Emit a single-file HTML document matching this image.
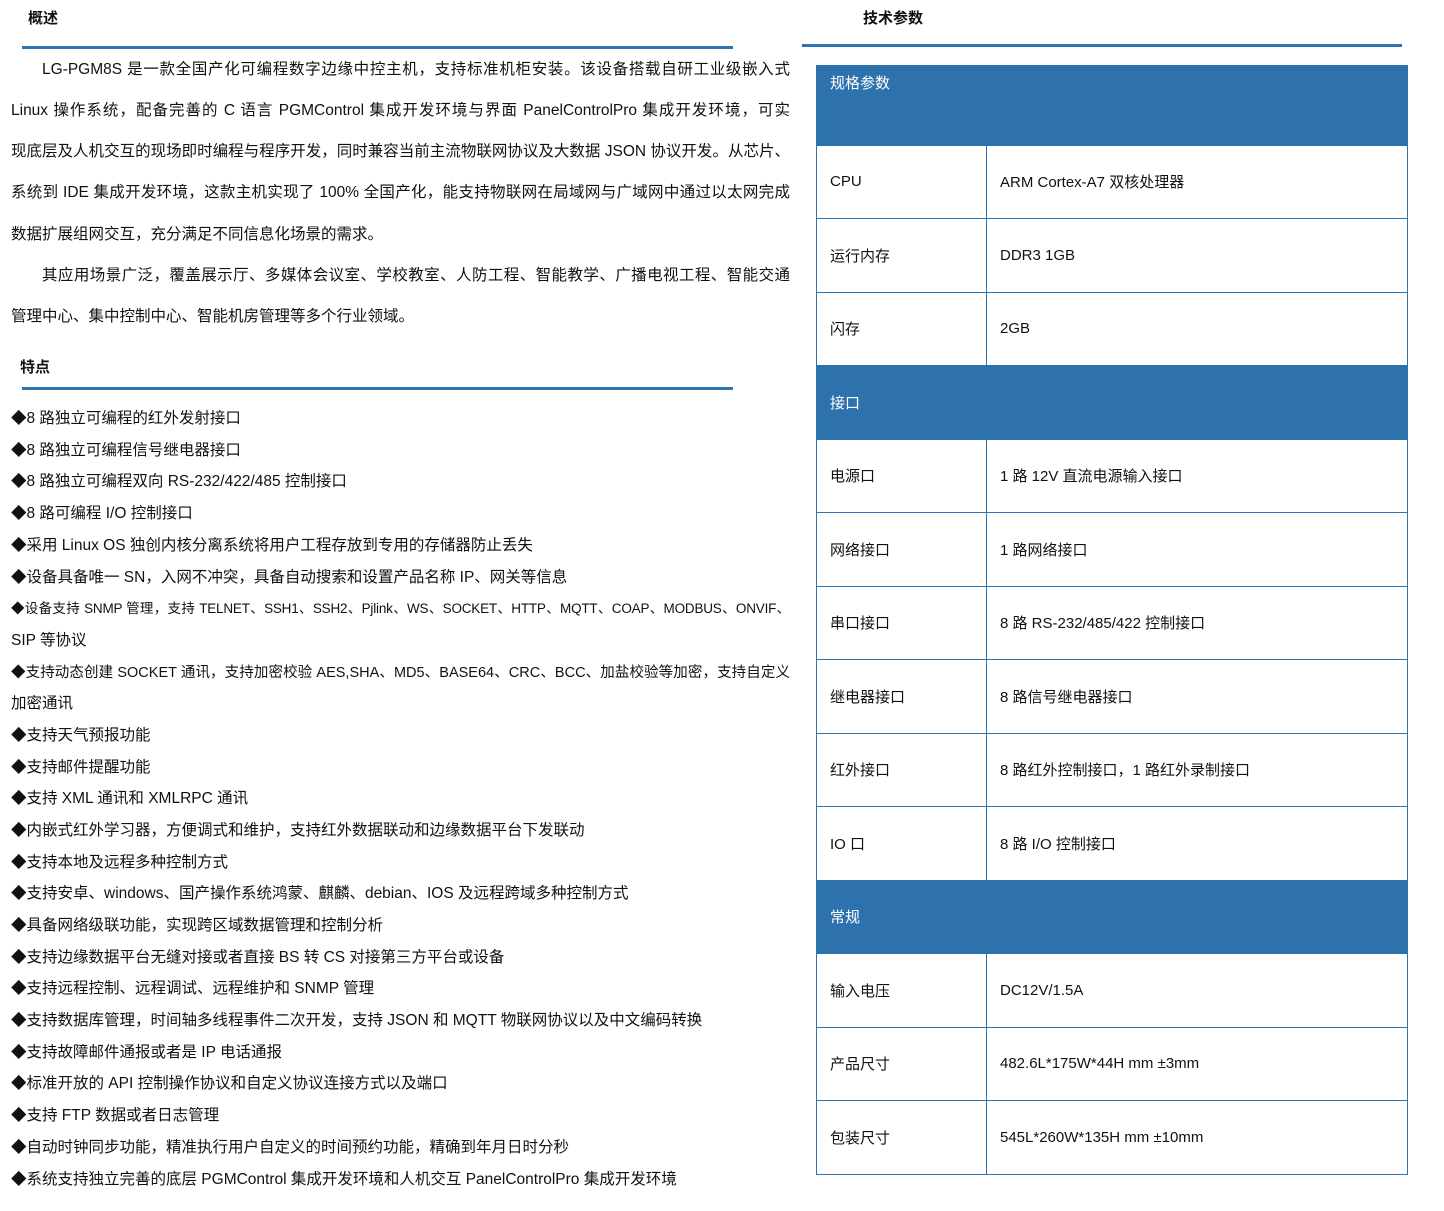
<!DOCTYPE html>
<html><head><meta charset="utf-8"><style>
body{margin:0;width:1444px;height:1211px;background:#fff;position:relative;font-family:"Liberation Sans","Noto Sans CJK SC",sans-serif;color:#111;font-size:15.5px;overflow:hidden}
.a{position:absolute;white-space:nowrap;line-height:20px;top:0}
.j{text-align:justify;text-align-last:justify;white-space:normal;height:20px;overflow:visible}
h{position:absolute;font-weight:bold;font-size:15px;line-height:20px}
.bar{position:absolute;height:3px;background:#2e74b5}
table{position:absolute;left:816px;top:65px;width:592px;border-collapse:collapse}
td{border:1.5px solid #2e74b5;height:72.5px;padding:0 0 0 13px;font-size:15px}
td.h{background:#2e72ad;color:#fff;vertical-align:middle}
td.h1{vertical-align:top;padding-top:6px}
td.l{width:156px}
</style></head><body>
<h style="left:28px;top:9px">概述</h>
<div class="bar" style="left:22px;top:46px;width:711px"></div>
<h style="left:863px;top:9px">技术参数</h>
<div class="bar" style="left:802px;top:44px;width:600px"></div>
<div class="a j" style="left:42px;top:60px;width:748px">LG-PGM8S 是一款全国产化可编程数字边缘中控主机，支持标准机柜安装。该设备搭载自研工业级嵌入式</div>
<div class="a j" style="left:11px;top:101px;width:779px">Linux 操作系统，配备完善的 C 语言 PGMControl 集成开发环境与界面 PanelControlPro 集成开发环境，可实</div>
<div class="a j" style="left:11px;top:142px;width:779px">现底层及人机交互的现场即时编程与程序开发，同时兼容当前主流物联网协议及大数据 JSON 协议开发。从芯片、</div>
<div class="a j" style="left:11px;top:183px;width:779px">系统到 IDE 集成开发环境，这款主机实现了 100% 全国产化，能支持物联网在局域网与广域网中通过以太网完成</div>
<div class="a" style="left:11px;top:225px">数据扩展组网交互，充分满足不同信息化场景的需求。</div>
<div class="a j" style="left:42px;top:266px;width:748px">其应用场景广泛，覆盖展示厅、多媒体会议室、学校教室、人防工程、智能教学、广播电视工程、智能交通</div>
<div class="a" style="left:11px;top:307px">管理中心、集中控制中心、智能机房管理等多个行业领域。</div>
<h style="left:20px;top:358px">特点</h>
<div class="bar" style="left:22px;top:387px;width:711px"></div>
<div class="a" style="left:11px;top:409px">◆8 路独立可编程的红外发射接口</div>
<div class="a" style="left:11px;top:441px">◆8 路独立可编程信号继电器接口</div>
<div class="a" style="left:11px;top:472px">◆8 路独立可编程双向 RS-232/422/485 控制接口</div>
<div class="a" style="left:11px;top:504px">◆8 路可编程 I/O 控制接口</div>
<div class="a" style="left:11px;top:536px">◆采用 Linux OS 独创内核分离系统将用户工程存放到专用的存储器防止丢失</div>
<div class="a" style="left:11px;top:568px">◆设备具备唯一 SN，入网不冲突，具备自动搜索和设置产品名称 IP、网关等信息</div>
<div class="a j" style="left:11px;top:599px;width:779px;font-size:13.5px;letter-spacing:-0.2px">◆设备支持 SNMP 管理，支持 TELNET、SSH1、SSH2、Pjlink、WS、SOCKET、HTTP、MQTT、COAP、MODBUS、ONVIF、</div>
<div class="a" style="left:11px;top:631px">SIP 等协议</div>
<div class="a j" style="left:11px;top:663px;width:779px;font-size:14.5px">◆支持动态创建 SOCKET 通讯，支持加密校验 AES,SHA、MD5、BASE64、CRC、BCC、加盐校验等加密，支持自定义</div>
<div class="a" style="left:11px;top:694px">加密通讯</div>
<div class="a" style="left:11px;top:726px">◆支持天气预报功能</div>
<div class="a" style="left:11px;top:758px">◆支持邮件提醒功能</div>
<div class="a" style="left:11px;top:789px">◆支持 XML 通讯和 XMLRPC 通讯</div>
<div class="a" style="left:11px;top:821px">◆内嵌式红外学习器，方便调式和维护，支持红外数据联动和边缘数据平台下发联动</div>
<div class="a" style="left:11px;top:853px">◆支持本地及远程多种控制方式</div>
<div class="a" style="left:11px;top:884px">◆支持安卓、windows、国产操作系统鸿蒙、麒麟、debian、IOS 及远程跨域多种控制方式</div>
<div class="a" style="left:11px;top:916px">◆具备网络级联功能，实现跨区域数据管理和控制分析</div>
<div class="a" style="left:11px;top:948px">◆支持边缘数据平台无缝对接或者直接 BS 转 CS 对接第三方平台或设备</div>
<div class="a" style="left:11px;top:979px">◆支持远程控制、远程调试、远程维护和 SNMP 管理</div>
<div class="a" style="left:11px;top:1011px">◆支持数据库管理，时间轴多线程事件二次开发，支持 JSON 和 MQTT 物联网协议以及中文编码转换</div>
<div class="a" style="left:11px;top:1043px">◆支持故障邮件通报或者是 IP 电话通报</div>
<div class="a" style="left:11px;top:1074px">◆标准开放的 API 控制操作协议和自定义协议连接方式以及端口</div>
<div class="a" style="left:11px;top:1106px">◆支持 FTP 数据或者日志管理</div>
<div class="a" style="left:11px;top:1138px">◆自动时钟同步功能，精准执行用户自定义的时间预约功能，精确到年月日时分秒</div>
<div class="a" style="left:11px;top:1170px">◆系统支持独立完善的底层 PGMControl 集成开发环境和人机交互 PanelControlPro 集成开发环境</div>
<table>
<tr><td class="h h1" colspan="2">规格参数</td></tr>
<tr><td class="l">CPU</td><td>ARM Cortex-A7 双核处理器</td></tr>
<tr><td class="l">运行内存</td><td>DDR3 1GB</td></tr>
<tr><td class="l">闪存</td><td>2GB</td></tr>
<tr><td class="h" colspan="2">接口</td></tr>
<tr><td class="l">电源口</td><td>1 路 12V 直流电源输入接口</td></tr>
<tr><td class="l">网络接口</td><td>1 路网络接口</td></tr>
<tr><td class="l">串口接口</td><td>8 路 RS-232/485/422 控制接口</td></tr>
<tr><td class="l">继电器接口</td><td>8 路信号继电器接口</td></tr>
<tr><td class="l">红外接口</td><td>8 路红外控制接口，1 路红外录制接口</td></tr>
<tr><td class="l">IO 口</td><td>8 路 I/O 控制接口</td></tr>
<tr><td class="h" colspan="2">常规</td></tr>
<tr><td class="l">输入电压</td><td>DC12V/1.5A</td></tr>
<tr><td class="l">产品尺寸</td><td>482.6L*175W*44H mm ±3mm</td></tr>
<tr><td class="l">包装尺寸</td><td>545L*260W*135H mm ±10mm</td></tr>
</table>
</body></html>
